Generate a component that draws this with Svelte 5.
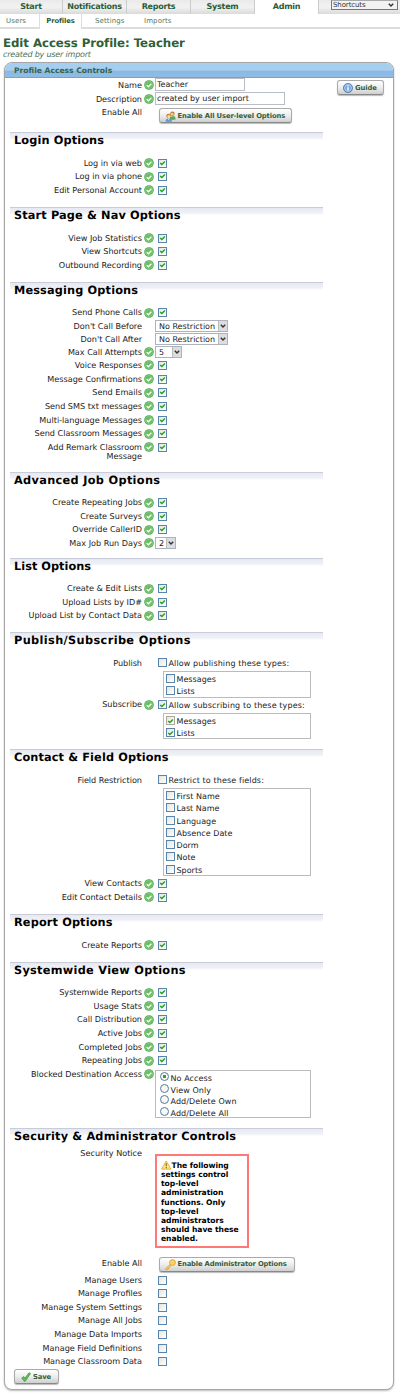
<script>
  const c = (label, checked = true, h = 13.67) => ({ kind: 'check', label, ok: checked, checked, h });
  const items = (...names) => names.map((name) => ({ name, checked: false }));

  const sections = [
    { title: 'Login Options', w: 90, height: 75, rows: [c('Log in via web'), c('Log in via phone'), c('Edit Personal Account')] },
    { title: 'Start Page & Nav Options', w: 166.5, height: 74.5, rows: [c('View Job Statistics'), c('View Shortcuts'), c('Outbound Recording')] },
    { title: 'Messaging Options', w: 124, height: 190, rows: [
      c('Send Phone Calls'),
      { kind: 'select', label: "Don't Call Before", value: 'No Restriction', width: 73, h: 13.1 },
      { kind: 'select', label: "Don't Call After", value: 'No Restriction', width: 73, h: 13.1 },
      { kind: 'select', label: 'Max Call Attempts', ok: true, value: '5', width: 27, h: 13.1 },
      c('Voice Responses'), c('Message Confirmations'), c('Send Emails'), c('Send SMS txt messages'),
      c('Multi-language Messages'), c('Send Classroom Messages'), c('Add Remark Classroom Message', true, 22)
    ] },
    { title: 'Advanced Job Options', w: 146, height: 86, rows: [
      c('Create Repeating Jobs'), c('Create Surveys'), c('Override CallerID'),
      { kind: 'select', label: 'Max Job Run Days', ok: true, value: '2', width: 21, h: 13.1 }
    ] },
    { title: 'List Options', w: 77, height: 74.5, rows: [c('Create & Edit Lists'), c('Upload Lists by ID#'), c('Upload List by Contact Data')] },
    { title: 'Publish/Subscribe Options', w: 176.5, height: 117, rows: [
      { kind: 'group', label: 'Publish', text: 'Allow publishing these types:', items: items('Messages', 'Lists'), h: 41.7 },
      { kind: 'group', label: 'Subscribe', ok: true, checked: true, text: 'Allow subscribing to these types:', h: 42,
        items: [{ name: 'Messages', checked: true, dim: true }, { name: 'Lists', checked: true }] }
    ] },
    { title: 'Contact & Field Options', w: 154.5, height: 165, rows: [
      { kind: 'group', label: 'Field Restriction', text: 'Restrict to these fields:', h: 103.8,
        items: items('First Name', 'Last Name', 'Language', 'Absence Date', 'Dorm', 'Note', 'Sports') },
      c('View Contacts'), c('Edit Contact Details')
    ] },
    { title: 'Report Options', w: 98.5, height: 47.5, rows: [c('Create Reports')] },
    { title: 'Systemwide View Options', w: 171.5, height: 166.5, rows: [
      c('Systemwide Reports'), c('Usage Stats'), c('Call Distribution'), c('Active Jobs'), c('Completed Jobs'), c('Repeating Jobs'),
      { kind: 'radio', label: 'Blocked Destination Access', ok: true, items: ['No Access', 'View Only', 'Add/Delete Own', 'Add/Delete All'], h: 50 }
    ] },
    { title: 'Security & Administrator Controls', w: 222, height: 240, rows: [
      { kind: 'notice', label: 'Security Notice', h: 104.5 },
      { kind: 'button', label: 'Enable All', h: 16.5 },
      ...['Users', 'Profiles', 'System Settings', 'All Jobs', 'Data Imports', 'Field Definitions', 'Classroom Data'].map((n) => c('Manage ' + n, false))
    ] }
  ];
</script>

{#snippet ok()}
  <svg class="ok" viewBox="0 0 10 10"><circle cx="5" cy="5" r="4.8" fill="#45a845" /><circle cx="5" cy="5" r="3.8" fill="#69bd62" stroke="#a5d99f" stroke-width=".5" /><path d="M2.7 5.1 4.4 6.8 7.4 3.7" fill="none" stroke="#fff" stroke-width="1.3" /></svg>
{/snippet}

{#snippet box(checked, dim = false)}
  <span class="box" class:dim>
    {#if checked}<svg viewBox="0 0 7 7"><path d="M1.2 2.9 2.9 4.6 5.9 1.6" fill="none" stroke="#21a121" stroke-width="1.4" /></svg>{/if}
  </span>
{/snippet}

{#snippet chevron()}
  <svg class="chev" viewBox="0 0 8 10"><path d="M1.8 3.7 4 6 6.2 3.7" fill="none" stroke="#333" stroke-width="1.4" /></svg>
{/snippet}

<div class="page">
  <nav class="tabs">
    <span>Start</span><span>Notifications</span><span>Reports</span><span>System</span><span class="active">Admin</span>
    <div class="short"><div class="shortcuts">Shortcuts{@render chevron()}</div></div>
  </nav>
  <nav class="sub"><span class="users">Users</span><span class="current">Profiles</span><span class="settings">Settings</span><span class="imports">Imports</span></nav>
  <header><h1>Edit Access Profile: Teacher</h1><p>created by user import</p></header>

  <main class="panel">
    <div class="head">Profile Access Controls</div>
    <div class="intro">
      <div class="fields">
        <div class="row name"><span class="label">Name</span><span class="mark">{@render ok()}</span><div class="input">Teacher</div></div>
        <div class="row desc"><span class="label">Description</span><span class="mark">{@render ok()}</span><div class="input wide">created by user import</div></div>
        <div class="row all"><span class="label">Enable All</span><span class="mark"></span>
          <button class="btn user">
            <svg viewBox="0 0 11 11"><circle cx="7.4" cy="2.8" r="2.2" fill="#bd7726" /><circle cx="7.2" cy="3.2" r="1.4" fill="#f8cf91" /><path d="M5 9V6.5q2-2 5-1l.7 3Z" fill="#58a65b" /><circle cx="3.6" cy="5" r="2.3" fill="#c77d24" /><circle cx="3.8" cy="5.5" r="1.5" fill="#ffdca5" /><path d="M.5 10.7Q.6 7.5 3.6 7.5t3.5 3.2Z" fill="#5c96d5" /><path d="m3 7.7.7 1.5.8-1.5Z" fill="#fff" /></svg>
            <span>Enable All User-level Options</span>
          </button>
        </div>
      </div>
      <button class="btn guide">
        <svg viewBox="0 0 10 10"><circle cx="5" cy="5" r="4.6" fill="#5287c7" stroke="#3d6ca9" stroke-width=".6" /><circle cx="5" cy="5" r="3.5" fill="#76a8df" stroke="#cfe2f8" stroke-width=".7" /><path d="M5 2.2v1.2M5 4.2v3.4" stroke="#fff" stroke-width="1.4" /></svg>
        <span>Guide</span>
      </button>
    </div>

    {#each sections as s}
      <section style:height="{s.height}px">
        <h2><svg width="240" height="17"><text x="0" y="11" textLength={s.w}>{s.title}</text></svg></h2>
        {#each s.rows as r}
          <div class="row {r.kind}-row" style:height="{r.h}px">
            <span class="label">{r.label}</span>
            <span class="mark">{#if r.ok}{@render ok()}{/if}</span>
            {#if r.kind === 'check'}
              <div class="one">{@render box(r.checked)}</div>
            {:else if r.kind === 'select'}
              <div class="select" style:width="{r.width}px"><span>{r.value}</span><i>{@render chevron()}</i></div>
            {:else if r.kind === 'group'}
              <div class="group">
                <div class="choice">{@render box(r.checked)}<span>{r.text}</span></div>
                <div class="list">
                  {#each r.items as it}<div class="item">{@render box(it.checked, it.dim)}<span>{it.name}</span></div>{/each}
                </div>
              </div>
            {:else if r.kind === 'radio'}
              <div class="radios">
                {#each r.items as it, i}<div><b class:on={i === 0}></b><span>{it}</span></div>{/each}
              </div>
            {:else if r.kind === 'notice'}
              <div class="notice"><svg viewBox="0 0 11 10"><path d="M5.5.8 10.3 9.3H.7Z" fill="#ffe58a" stroke="#e6ad37" stroke-width="1" stroke-linejoin="round" /><path d="M5.5 3.2v3M5.5 7v1.3" stroke="#8c681d" stroke-width="1.2" /></svg>The following<br />settings control<br />top-level<br />administration<br />functions. Only<br />top-level<br />administrators<br />should have these<br />enabled.</div>
            {:else}
              <button class="btn admin">
                <svg viewBox="0 0 11 11"><path d="m6 4.5-5.2 5v1.2h2V9.5H4V8.2l2.5-2" fill="#ffd25c" stroke="#d99a24" stroke-width=".7" /><circle cx="7.5" cy="3.5" r="2.9" fill="#ffd469" stroke="#dc9a23" stroke-width=".8" /><circle cx="8.3" cy="2.7" r=".9" fill="#fff" stroke="#bb7e18" stroke-width=".3" /></svg>
                <span>Enable Administrator Options</span>
              </button>
            {/if}
          </div>
        {/each}
      </section>
    {/each}

    <button class="btn save"><svg viewBox="0 0 10 10"><path d="m.7 6 2-1.4 1.2 1.6L8 .8l1.5.8L4.3 9.2H3.2Z" fill="#5dc24f" stroke="#349437" stroke-width=".7" /></svg><span>Save</span></button>
  </main>
</div>

<style>
  :global(body) { background: #fff; }
  .page { width: 400px; height: 1393px; overflow: hidden; font: 8px/9px "DejaVu Sans", Verdana, sans-serif; color: #222; text-rendering: geometricPrecision; }
  .page * { box-sizing: border-box; }
  svg { display: block; flex: none; }
  .tabs { display: flex; height: 14px; background: linear-gradient(#eaeaea, #f2f2f2 50%, #dadada); }
  .tabs > span { width: 64px; flex: none; border-right: 1px solid #ccc; text-align: center; font-weight: bold; font-size: 8px; letter-spacing: -.25px; line-height: 13px; color: #2c5c36; }
  .tabs > span:first-child { width: 63px; }
  .tabs .active { background: #fff; }
  .short { padding: 0 0 0 12px; }
  .shortcuts { display: flex; align-items: center; justify-content: space-between; width: 67px; height: 10px; padding: 0 2px 0 1px; border: 1px solid #777; border-top-color: #aaa; background: #f2f2f2; font-size: 7px; letter-spacing: -.1px; color: #333; }
  .chev { width: 8px; height: 10px; }
  .sub { display: flex; height: 15px; border-bottom: 2px solid #ddd; font-size: 7px; line-height: 14px; color: #55785b; letter-spacing: .1px; }
  .users { width: 39px; padding-left: 6px; }
  .current { width: 43px; height: 15px; border: solid #ddd; border-width: 0 1px; background: #fff; text-align: center; font-weight: bold; font-size: 6.8px; letter-spacing: -.1px; color: #2c5c36; }
  .settings { width: 62px; padding-left: 13px; }
  header { height: 33px; padding: 7px 0 0 3px; color: #2f6038; }
  h1 { margin: 0; font-size: 11.8px; line-height: 14px; letter-spacing: -.07px; white-space: nowrap; }
  header p { margin: 0; font-size: 8px; font-style: italic; line-height: 9px; letter-spacing: -.19px; color: #4b7152; }
  .panel { width: 390px; height: 1328px; margin-left: 4px; border: 1px solid #a6a6a6; border-width: 1px 1px 1px 1.5px; border-radius: 8px; box-shadow: 0 1px 2px #bbb; background: #fff; }
  .head { height: 15px; padding-left: 9px; border-bottom: 1px solid #879eb5; border-radius: 7px 7px 0 0; background: linear-gradient(#a6ceef 0 50%, #8bb9e3 60%, #90bce4); font-size: 7.6px; font-weight: bold; line-height: 16px; color: #32644e; }
  .intro { display: flex; height: 54px; }
  .fields { width: 332px; }
  .row { display: flex; align-items: flex-start; }
  .label { width: 137px; flex: none; padding: 2.5px 0 0 24px; text-align: right; font-size: 8.1px; }
  .mark { width: 13px; height: 13.6px; flex: none; padding: 2px 0 0 2px; }
  .ok { width: 10px; height: 10px; }
  .name, .desc { height: 14px; }
  .input { width: 90px; height: 13px; border: 1px solid #b9bdc5; padding: 1px 1px 0; font-size: 8px; line-height: 10px; }
  .input.wide { width: 130px; }
  .all .label { padding-top: 2px; }
  .btn { display: flex; align-items: center; height: 15px; padding: 1px 0 0 5px; border: 1px solid #aaa; border-bottom-color: #888; border-radius: 3px; background: linear-gradient(#fff 0, #ededed 50%, #cfcfcf); box-shadow: 0 1px 1px #bbb; font: bold 6.8px/9px "DejaVu Sans", Verdana, sans-serif; color: #335e39; white-space: nowrap; gap: 1.5px; }
  .btn svg { width: 11px; height: 11px; }
  .user { width: 133px; margin: 2px 0 0 4px; letter-spacing: -.13px; }
  .admin { width: 136px; margin: 0 0 0 4px; letter-spacing: -.16px; }
  .guide { width: 47px; margin-top: 2px; gap: 2px; letter-spacing: -.1px; }
  .guide svg, .save svg { width: 10px; height: 10px; }
  .save { width: 45px; margin: 1px 0 0 9px; padding-left: 6px; gap: 2px; letter-spacing: -.1px; }
  section { width: 313px; margin-left: 5px; border-top: 1px solid #c8cbd9; background: linear-gradient(#e7e9f2, #f0f1f7 5px, #fff 7px); }
  h2 { height: 23px; margin: 0; padding-left: 3.5px; }
  h2 svg { font: bold 11.3px "DejaVu Sans", Verdana, sans-serif; fill: #000; overflow: visible; }
  section .label { width: 132px; padding-left: 14px; }
  section .notice-row .label { margin-top: -6px; }
  .one { padding: 2.5px 0 0 3px; }
  .box { display: block; width: 9px; height: 9px; flex: none; border: 1px solid #5b84aa; background: linear-gradient(135deg, #e4e4df, #fff); }
  .box svg { width: 7px; height: 7px; }
  .dim { border-color: #aaa99a; }
  .select { display: flex; justify-content: space-between; height: 12px; margin-top: .5px; border: 1px solid #aeb2ba; padding-left: 3px; line-height: 11px; white-space: nowrap; }
  .select i { width: 9px; background: #dcdde0; border-left: 1px solid #bbb; }
  .group { width: 156px; padding: 2px 0 0 3px; }
  .choice, .item { display: flex; gap: 1.5px; white-space: nowrap; letter-spacing: .02px; }
  .choice { height: 13px; letter-spacing: .12px; }
  .choice span, .item span { padding-top: 1px; }
  .list { width: 148px; margin-left: 5px; padding: 2px 0 0 2px; border: 1px solid #bbb; }
  .item { height: 12.25px; }
  .item:last-child { height: 10.5px; }
  .radios { width: 156px; height: 48px; margin-top: 2.5px; padding: 1px 0 0 4px; border: 1px solid #bbb; }
  .radios div { display: flex; height: 11.6px; gap: 1.5px; }
  .radios span { padding-top: 2px; letter-spacing: .08px; }
  .radios b { width: 9px; height: 9px; border: 1px solid #527da1; border-radius: 50%; background: #f7f7f4; }
  .radios .on { background: radial-gradient(circle, #27a827 1.5px, #f7f7f4 2px); }
  .notice { width: 94px; height: 94px; margin-top: 2px; padding: 4px 0 0 4px; border: 2px solid #f77; font-size: 7.6px; font-weight: bold; line-height: 9.15px; letter-spacing: -.04px; white-space: nowrap; color: #000; }
  .notice svg { display: inline-block; width: 10.5px; height: 10px; vertical-align: -2px; }
</style>
